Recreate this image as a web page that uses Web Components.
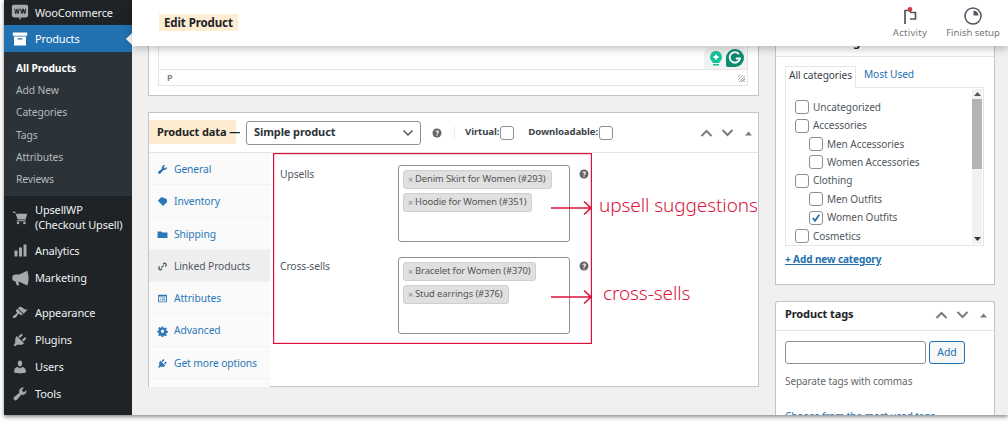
<!doctype html>
<html lang="en"><head><meta charset="utf-8"><title>Edit Product</title>
<style>
html,body{margin:0;padding:0;background:#fff;height:424px;overflow:hidden}
body{font:11px/1.3 "Noto Sans","Open Sans",sans-serif;color:#50575e}
</style></head><body>
<wp-app>
  <wp-sidebar slot="side"></wp-sidebar>
  <wp-topbar slot="top"></wp-topbar>
  <wp-editor-stub slot="left"></wp-editor-stub>
  <wp-product-data slot="left"></wp-product-data>
  <wp-categories slot="right"></wp-categories>
  <wp-tags slot="right"></wp-tags>
</wp-app>
<script>
const ICONS={
 wrench:'<path d="M16.68 9.77c-1.34 1.34-3.3 1.67-4.95.99l-5.41 6.52c-.99.99-2.59.99-3.58 0s-.99-2.59 0-3.57l6.52-5.42c-.68-1.65-.35-3.61.99-4.95 1.28-1.28 3.12-1.62 4.72-1.06l-2.89 2.89 2.82 2.82 2.86-2.87c.53 1.58.18 3.39-1.08 4.65z"/>',
 plug:'<path d="M13.11 4.36L9.87 7.6 8 5.73l3.24-3.24c.35-.34 1.05-.2 1.56.32.52.51.66 1.21.31 1.55zm-8 1.77l.91-1.12 9.01 9.01-1.19.84c-.71.71-2.63 1.16-3.82 1.16H6.14L4.9 17.26c-.59.59-1.54.59-2.12 0-.59-.58-.59-1.53 0-2.12l1.24-1.24v-3.88c0-1.13.4-3.19 1.09-3.89zm7.26 3.97l3.24-3.24c.34-.35 1.04-.21 1.55.31.52.51.66 1.21.31 1.55l-3.24 3.25z"/>',
 user:'<path d="M10 9.25c-2.27 0-2.73-3.44-2.73-3.44C7 4.02 7.82 2 9.97 2c2.16 0 2.98 2.02 2.71 3.81 0 0-.41 3.44-2.68 3.44zm0 2.57L12.72 10c2.39 0 4.52 2.33 4.52 4.53v2.49s-3.65 1.13-7.24 1.13c-3.65 0-7.24-1.13-7.24-1.13v-2.49c0-2.25 1.94-4.48 4.47-4.48z"/>',
 brush:'<path d="M14.48 11.06L7.41 3.99l1.5-1.5c.5-.56 2.3-.47 3.51.32 1.21.8 1.43 1.28 2.91 2.1 1.18.64 2.45 1.26 4.45.85zm-.71.71L6.7 4.7 4.93 6.47c-.39.39-.39 1.02 0 1.41l1.06 1.06c.39.39.39 1.03 0 1.42-.6.6-1.43 1.11-2.21 1.69-.35.26-.7.53-1.01.84C1.43 13.23.4 14.96 1.4 15.96c.99 1 2.72-.05 4.07-1.4.31-.31.58-.66.84-1.01.58-.78 1.09-1.61 1.69-2.21.39-.39 1.02-.39 1.41 0l1.06 1.06c.39.39 1.02.39 1.41 0z"/>',
 bars:'<rect x="2" y="10" width="4" height="8"/><rect x="8" y="6" width="4" height="12"/><rect x="14" y="2" width="4" height="16"/>',
 mega:'<path d="M18 2 8.500 6.500H4.500a4 4 0 0 0-.5 8L5.500 19h3L7.500 15H8.500L18 19.500c.8-2.500 1.500-5.500 1.500-8.700S18.800 4.500 18 2z"/>',
 cart:'<path d="M1 3h3l1 3h14l-2 7H7.2L4 4.6H1z"/><path d="M6 14h11v1.4H6z"/><circle cx="7.5" cy="17.5" r="1.6"/><circle cx="15.5" cy="17.5" r="1.6"/>',
 box:'<path fill-rule="evenodd" d="M1 2h18v4H1zM2.5 7h15v11h-15zM7 9v1.6h6V9z"/>',
 tag:'<path d="M1.500 8.500L8 2l9.500 3.500L18.500 11 11 18z"/>',
 truck:'<path d="M1 4.500h7l2 2h9v10H1z"/>',
 link:'<path fill="none" stroke="currentColor" stroke-width="2.400" d="M8 12l4-4M11 6l1.500-1.500a3 3 0 0 1 4 4L15 10M9 14l-1.500 1.500a3 3 0 0 1-4-4L5 10"/>',
 list:'<path fill-rule="evenodd" d="M2 3h16v14H2zM3.600 6.500v9h12.800v-9zM5 8h2v1.500H5zM8.500 8H15v1.500H8.500zM5 11.500h2V13H5zM8.500 11.500H15V13H8.500z"/>',
 gear:'<path fill-rule="evenodd" d="M8.500 1.500h3l.5 2.600 1.700.7 2.200-1.500 2.100 2.100-1.500 2.200.7 1.700 2.600.5v3l-2.600.5-.7 1.700 1.500 2.200-2.100 2.100-2.200-1.500-1.700.7-.5 2.600h-3l-.5-2.600-1.700-.7-2.200 1.500L2.200 16.700l1.500-2.200-.7-1.700-2.600-.5v-3l2.600-.5.7-1.700L2.200 4.400 4.300 2.300l2.200 1.500 1.700-.7zM10 7a3 3 0 1 0 0 6 3 3 0 0 0 0-6z" transform="translate(0 -.5)"/>',
 woo:'<rect x="1" y="2" width="18" height="14" rx="2"/><path d="M8 16l3 3v-3z"/><path fill="#1d2327" d="M3.500 6.500h1.200l.6 3.500.8-3.500h1l.8 3.500.6-3.500h1.200l-1.100 5.500H7.300l-.7-3-.7 3H4.600zM10 6.500h1.300l.7 3.300.7-3.300h1.600l.7 3.300.7-3.300h1.300L16 12h-1.500l-.8-3-.7 3h-1.500z"/>',
 help:'<circle cx="10" cy="10" r="9"/><path fill="#fff" d="M9 12.400c-.1-2.600 2.500-2.700 2.500-4.200 0-.8-.6-1.200-1.400-1.200-.8 0-1.500.4-2 1L6.800 6.600C7.600 5.600 8.800 5 10.300 5c2 0 3.500 1 3.500 2.900 0 2.400-2.600 2.500-2.600 4.500zM8.900 13.400h2.300v2.200H8.900z"/>'
};
function comp(name,css,html){
  customElements.define(name,class extends HTMLElement{
    connectedCallback(){
      if(this.shadowRoot)return;
      const r=this.attachShadow({mode:'open'});
      r.innerHTML='<style>'+css+'</style>'+(typeof html==='function'?html(this):html);
    }
  });
}
comp('wp-icon',':host{display:inline-flex;flex:none}svg{display:block;fill:currentColor}',
 el=>{const s=el.getAttribute('size')||14;return `<svg width="${s}" height="${s}" viewBox="0 0 20 20">${ICONS[el.getAttribute('name')]}</svg>`});
comp('wp-app',`
 :host{display:block;width:1004px;height:415px;margin-left:4px;position:relative;background:#f0f0f1;box-shadow:0 2px 4px rgba(0,0,0,.45);--f:"Noto Sans","Open Sans",sans-serif;font-family:var(--f)}
 .wrap{display:flex;height:415px;overflow:hidden}
 .side{flex:0 0 128px}
 .main{flex:1;min-width:0;display:flex;flex-direction:column;height:415px;position:relative}
 .top{position:relative;z-index:3}
 .cols{display:flex;padding-left:16px;gap:16px;flex:1;min-height:0}
 .left{flex:0 0 611px;display:flex;flex-direction:column;gap:16px}
 .right{flex:0 0 220px;display:flex;flex-direction:column;gap:16px;margin-top:-18px}
`,`<div class="wrap"><div class="side"><slot name="side"></slot></div><div class="main"><div class="top"><slot name="top"></slot></div><div class="cols"><div class="left"><slot name="left"></slot></div><div class="right"><slot name="right"></slot></div></div></div></div>`);
comp('wp-menu-item',`
 :host{display:flex;align-items:center;height:27px;color:#f0f0f1;font-size:11px;letter-spacing:-.15px;line-height:15px}
 :host([current]){background:#2271b1;color:#fff;position:relative}
 :host([tall]){height:40px}
 .i{width:31px;display:flex;justify-content:center;padding-left:1px;box-sizing:border-box;color:#a7aaad}
 :host([current]) .i{color:#fff}
 :host([current])::after{content:"";position:absolute;right:0;top:8px;border:6px solid transparent;border-right-color:#fff;border-left-width:0}
`,el=>`<span class="i"><wp-icon name="${el.getAttribute('icon')}" size="${el.getAttribute('size')||17}"></wp-icon></span><span><slot></slot></span>`);
comp('wp-sub-item',`:host{display:block;height:22.2px;line-height:22.2px;padding-left:12px;font-size:10.3px;letter-spacing:-.1px;color:#b4b9be}:host([current]){color:#fff;font-weight:700}`,`<slot></slot>`);
comp('wp-sidebar',`
 :host{display:block;height:415px;background:#1d2327;overflow:hidden}
 .first{margin-top:-1px}
 .sub{background:#2c3338;padding:5px 0 6px;height:133px;}
 .gap{height:8px}
`,`<wp-menu-item icon="woo" size="18" class="first" style="height:26px">WooCommerce</wp-menu-item>
 <wp-menu-item icon="box" size="16" current>Products</wp-menu-item>
 <div class="sub"><wp-sub-item current>All Products</wp-sub-item><wp-sub-item>Add New</wp-sub-item><wp-sub-item>Categories</wp-sub-item><wp-sub-item>Tags</wp-sub-item><wp-sub-item>Attributes</wp-sub-item><wp-sub-item>Reviews</wp-sub-item></div>
 <wp-menu-item icon="cart" size="16" tall style="margin-top:1px">UpsellWP<br>(Checkout Upsell)</wp-menu-item>
 <wp-menu-item icon="bars" size="15">Analytics</wp-menu-item>
 <wp-menu-item icon="mega" size="17">Marketing</wp-menu-item>
 <div class="gap"></div>
 <wp-menu-item icon="brush" size="16">Appearance</wp-menu-item>
 <wp-menu-item icon="plug" size="16">Plugins</wp-menu-item>
 <wp-menu-item icon="user" size="16">Users</wp-menu-item>
 <wp-menu-item icon="wrench" size="16">Tools</wp-menu-item>`);
comp('wp-topbar',`
 :host{display:flex;align-items:flex-start;justify-content:space-between;height:46px;background:#fff;box-shadow:0 2px 9px rgba(0,0,0,.28);padding-left:27px}
 .t{margin-top:14px;height:17px;line-height:17px;padding:0 5px;background:#fdedd3;color:#1d2327;font-weight:700;font-size:11.5px;letter-spacing:-.1px}
 .acts{display:flex;gap:14px;padding-right:7px;color:#757575;font-size:9.5px;text-align:center}
 .a{display:flex;flex-direction:column;align-items:center;padding-top:6px;line-height:12px}
 svg{display:block;margin-bottom:1px}
`,`<div class="t">Edit Product</div><div class="acts">
 <div class="a" style="width:42px;letter-spacing:.3px"><svg width="20" height="20" viewBox="0 0 20 20"><path fill="none" stroke="#50575e" stroke-width="1.700" d="M5 18V4.500h4.500L11 6.500h4.500V13H10"/><circle cx="10" cy="3.200" r="2.300" fill="#d63638"/></svg>Activity</div>
 <div class="a" style="width:56px"><svg width="20" height="20" viewBox="0 0 20 20"><circle cx="10" cy="10" r="8" fill="none" stroke="#50575e" stroke-width="1.500"/><path d="M10.500 4.500a5.500 5.500 0 0 1 5 5h-5z" fill="#50575e"/></svg>Finish setup</div></div>`);
comp('wp-editor-stub',`
 :host{display:block;height:50px;background:#fff;border:1px solid #c3c4c7;border-top:0;box-sizing:border-box;padding:0 10px 9px 9px;flex:none}
 .box{height:40px;border:1px solid #e4e4e4;border-top:0;box-sizing:border-box;display:flex;flex-direction:column}
 .ed{flex:1;display:flex;justify-content:flex-end;align-items:flex-end;background:#fff;border-bottom:1px solid #e4e4e4}
 .g{display:flex;align-items:center;gap:3px;background:#f1f3f3;padding:2px 3px 2px 5px;border-radius:8px 8px 0 0}
 .p{height:15px;display:flex;align-items:center;justify-content:space-between;padding:1px 2px 0 8px;font-size:9px;color:#777;font-weight:600;box-sizing:border-box}
 .h{width:7px;height:7px;background:repeating-linear-gradient(135deg,transparent 0 1px,#aaa 1px 2px)}
`,`<div class="box"><div class="ed"><div class="g"><svg width="14" height="17" viewBox="0 0 14 17"><path fill="#15c39a" d="M7 1a6 6 0 0 1 3.500 10.800V13h-7v-1.200A6 6 0 0 1 7 1zM4 14h6v1.500H4z"/><path fill="#fff" d="M6 4.500h2V6h1.500v2H8v1.500H6V8H4.500V6H6z"/></svg><svg width="18" height="18" viewBox="0 0 18 18"><path fill="#0f8a6e" d="M9 0a9 9 0 1 1 0 18H2a2 2 0 0 1-2-2V9a9 9 0 0 1 9-9z"/><path fill="none" stroke="#fff" stroke-width="1.800" d="M13 5.200A5.200 5.200 0 1 0 14 9.500H9.800"/></svg></div></div><div class="p"><span>P</span><span class="h"></span></div></div>`);
comp('wp-handles',`:host{display:flex;align-items:center;gap:8px;color:#787c82}svg{display:block}`,
 `<svg width="13" height="10" viewBox="0 0 13 10"><path d="M1.500 8l5-5 5 5" fill="none" stroke="currentColor" stroke-width="2"/></svg><svg width="13" height="10" viewBox="0 0 13 10"><path d="M1.500 2l5 5 5-5" fill="none" stroke="currentColor" stroke-width="2"/></svg><svg width="13" height="10" viewBox="0 0 13 10"><path d="M3 7.500l3.500-4 3.500 4z" fill="currentColor"/></svg>`);
comp('wp-check',`:host{display:inline-block;flex:none;width:12px;height:12px;border:1px solid #8c8f94;border-radius:3px;background:#fff;box-sizing:content-box}svg{display:block}`,
 el=>el.hasAttribute('checked')?`<svg width="12" height="12" viewBox="0 0 13 13"><path d="M3 6.500l2.500 3L10 3" fill="none" stroke="#2271b1" stroke-width="2"/></svg>`:'');
comp('wp-tab',`
 :host{display:flex;align-items:center;height:32.300px;padding:2px 0 0 8px;gap:6px;color:#2b77b8;font-size:10.300px;letter-spacing:-.1px;background:#fafafa;border-bottom:1px solid #f2f2f2;box-sizing:border-box}
 :host([active]){background:#eee;color:#50575e}
`,el=>`<wp-icon name="${el.getAttribute('icon')}" size="11"></wp-icon><span><slot></slot></span>`);
comp('wp-pill',`:host{display:flex;width:max-content;align-items:center;height:19px;box-sizing:border-box;padding:0 5px 0 4px;gap:2px;background:#e0e0e0;border:1px solid #cfcfcf;border-radius:3px;color:#555;font-size:9.400px;letter-spacing:-.1px;margin-bottom:4px}.x{color:#888;font-size:9px}`,`<span class="x">×</span><span><slot></slot></span>`);
comp('wp-link-field',`
 :host{display:flex;height:92px;padding:0 0 0 7px;box-sizing:border-box;position:relative}
 .l{flex:0 0 118px;padding-top:3px;font-size:10.300px;color:#50575e;letter-spacing:-.1px}
 .b{flex:0 0 172px;height:77px;border:1px solid #8c8f94;border-radius:3px;box-sizing:border-box;padding:4px 4px}
 .h{margin:3px 0 0 9px;color:#666}
`,el=>`<div class="l">${el.getAttribute('label')}</div><div class="b"><slot></slot></div><div class="h"><wp-icon name="help" size="10"></wp-icon></div>`);
comp('wp-product-data',`
 :host{display:block;height:275px;background:#fff;border:1px solid #c3c4c7;box-sizing:border-box;position:relative;flex:none}
 .hd{display:flex;align-items:center;height:39px;border-bottom:1px solid #e2e4e7;font-size:9.600px;color:#3c434a;font-weight:700;letter-spacing:-.1px}
 .title{align-self:flex-start;margin-top:7px;height:24px;line-height:23px;width:87px;box-sizing:border-box;padding-left:8px;background:#fdeccf;color:#1d2327;white-space:nowrap;flex:none}
 .title span{font-weight:700;font-size:11px}
 .sel{margin-left:10px;width:175px;height:24px;border:1px solid #8c8f94;border-radius:3px;box-sizing:border-box;display:flex;align-items:center;justify-content:space-between;padding:0 6px 0 7px;color:#2c3338;font-size:11px}
 .q{margin-left:11px;color:#666;display:flex}
 .sep{width:1px;height:14px;background:#eee;margin:0 10px 0 12px}
 .opt{display:flex;align-items:center;gap:1px;margin-right:14px;}
 wp-handles{margin-left:auto;margin-right:3px}
 .body{display:flex;height:234px}
 .tabs{width:121px;background:#fafafa;flex:none}
 .panel{padding:12px 0 0 3px;flex:1}
 .redbox{position:absolute;left:124px;top:40px;pointer-events:none}
 .note{position:absolute;color:#dc143c;font-size:19px;line-height:24px;white-space:nowrap;letter-spacing:-.1px;font-weight:300}
 .arr{position:absolute}
`,`<div class="hd"><div class="title"><span>Product data —</span></div><div class="sel">Simple product<svg width="12" height="8" viewBox="0 0 12 8"><path d="M1.500 1.500L6 6l4.500-4.500" fill="none" stroke="#50575e" stroke-width="1.500"/></svg></div>
 <span class="q"><wp-icon name="help" size="10"></wp-icon></span><span class="sep"></span>
 <span class="opt">Virtual:<wp-check></wp-check></span><span class="opt">Downloadable:<wp-check></wp-check></span><wp-handles></wp-handles></div>
 <div class="body"><div class="tabs"><wp-tab icon="wrench">General</wp-tab><wp-tab icon="tag">Inventory</wp-tab><wp-tab icon="truck">Shipping</wp-tab><wp-tab icon="link" active>Linked Products</wp-tab><wp-tab icon="list">Attributes</wp-tab><wp-tab icon="gear">Advanced</wp-tab><wp-tab icon="plug">Get more options</wp-tab></div>
 <div class="panel"><wp-link-field label="Upsells"><wp-pill>Denim Skirt for Women (#293)</wp-pill><wp-pill>Hoodie for Women (#351)</wp-pill></wp-link-field>
 <wp-link-field label="Cross-sells"><wp-pill>Bracelet for Women (#370)</wp-pill><wp-pill>Stud earrings (#376)</wp-pill></wp-link-field></div></div>
 <svg class="redbox" width="319" height="191" viewBox="0 0 319 191"><rect x=".6" y=".6" width="317.800" height="189.800" fill="none" stroke="#e0103c" stroke-width="1.200"/></svg>
 <svg class="arr" style="left:402px;top:86px" width="42" height="18" viewBox="0 0 42 18"><path d="M0 9h40M33 2.500L40 9l-7 6.500" fill="none" stroke="#dc143c" stroke-width="1.700"/></svg>
 <svg class="arr" style="left:402px;top:175px" width="42" height="18" viewBox="0 0 42 18"><path d="M0 9h40M33 2.500L40 9l-7 6.500" fill="none" stroke="#dc143c" stroke-width="1.700"/></svg>
 <span class="note" style="left:450px;top:80px">upsell suggestions</span>
 <span class="note" style="left:454px;top:168px">cross-sells</span>`);
comp('wp-cat-row',`:host{display:flex;align-items:center;gap:4px;height:18.430px;font-size:10px;letter-spacing:-.05px;color:#50575e;white-space:nowrap}:host([child]){padding-left:14px}`,
 el=>`<wp-check ${el.hasAttribute('checked')?'checked':''}></wp-check><span><slot></slot></span>`);
comp('wp-categories',`
 :host{display:block;height:257px;flex:none;background:#fff;border:1px solid #c3c4c7;box-sizing:border-box;position:relative}
 .hd{height:27px;border-bottom:1px solid #e2e4e7;display:flex;align-items:flex-start;padding-left:9px;font-weight:700;font-size:11px;color:#1d2327;letter-spacing:-.1px;line-height:25px;white-space:nowrap;}
 .tabs{display:flex;margin:9px 0 0 9px;height:22px;font-size:10.200px;letter-spacing:-.1px;line-height:17px}
 .tabs span{padding:0 3px;}
 .on{border:1px solid #e5e5e5;border-bottom:1px solid #fff;color:#3c434a;position:relative;z-index:1;height:22px;box-sizing:border-box}
 .off{color:#2271b1;padding-left:8px!important}
 .list{margin:-1px 0 0 9px;width:199px;height:159px;border:1px solid #e5e5e5;box-sizing:border-box;display:flex;overflow:hidden}
 .rows{flex:1;padding:10px 0 0 9px}
 .sb{width:10px;margin:1px 1px 1px 0;background:#f1f1f1;display:flex;flex-direction:column;justify-content:space-between;align-items:center;position:relative;flex:none}
 .thumb{position:absolute;left:0;right:0;top:10px;height:70px;background:#b4b4b4}
 .ar{padding:3px 0;display:block}
 .add{margin:7px 0 0 9px;font-size:10px;font-weight:700;color:#2271b1;text-decoration:underline;letter-spacing:-.1px}
`,`<div class="hd">Product categories</div><div class="tabs"><span class="on">All categories</span><span class="off">Most Used</span></div>
 <div class="list"><div class="rows"><wp-cat-row>Uncategorized</wp-cat-row><wp-cat-row>Accessories</wp-cat-row><wp-cat-row child>Men Accessories</wp-cat-row><wp-cat-row child>Women Accessories</wp-cat-row><wp-cat-row>Clothing</wp-cat-row><wp-cat-row child>Men Outfits</wp-cat-row><wp-cat-row child checked>Women Outfits</wp-cat-row><wp-cat-row>Cosmetics</wp-cat-row></div>
 <div class="sb"><svg class="ar" width="7" height="4" viewBox="0 0 7 4"><path d="M3.500 0L7 4H0z" fill="#555"/></svg><div class="thumb"></div><svg class="ar" width="7" height="4" viewBox="0 0 7 4"><path d="M3.500 4L7 0H0z" fill="#333"/></svg></div></div>
 <div class="add">+ Add new category</div>`);
comp('wp-tags',`
 :host{display:block;flex:1;background:#fff;border:1px solid #c3c4c7;border-bottom:0;border-radius:3px 3px 0 0;box-sizing:border-box;overflow:hidden;min-height:0}
 .hd{height:29px;border-bottom:1px solid #e2e4e7;display:flex;align-items:center;justify-content:space-between;padding:0 4px 3px 9px;box-sizing:border-box;font-weight:700;font-size:11px;color:#1d2327;letter-spacing:-.1px}
 .row{display:flex;gap:3px;margin:10px 0 0 9px}
 .in{width:141px;height:23px;border:1px solid #8c8f94;border-radius:3px;box-sizing:border-box;background:#fff}
 .btn{width:36px;height:23px;border:1px solid #2271b1;border-radius:3px;box-sizing:border-box;background:#f6f7f7;color:#2271b1;font-size:10.500px;text-align:center;line-height:21px}
 .s{margin:10px 0 0 9px;font-size:10px;color:#646970;letter-spacing:-.1px;line-height:14px}
 .c{margin:21px 0 0 9px;font-size:10px;color:#2271b1;text-decoration:underline;letter-spacing:-.1px;line-height:14px;white-space:nowrap}
`,`<div class="hd">Product tags<wp-handles></wp-handles></div><div class="row"><div class="in"></div><div class="btn">Add</div></div><div class="s">Separate tags with commas</div><div class="c">Choose from the most used tags</div>`);
</script>
</body></html>
